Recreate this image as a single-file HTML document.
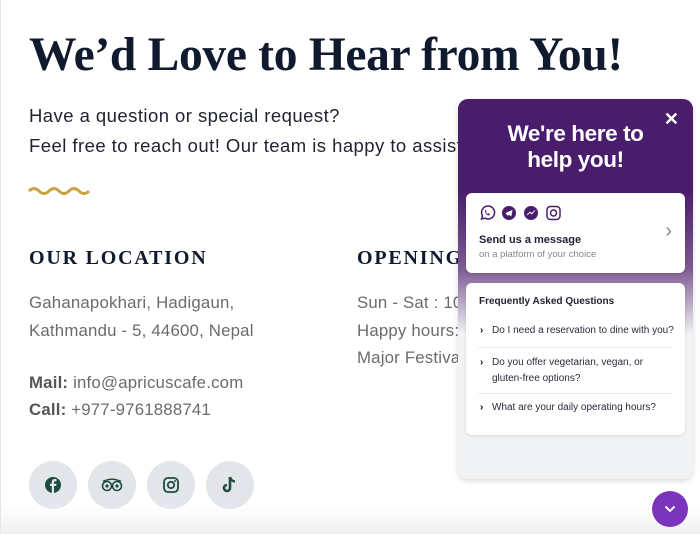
<!DOCTYPE html>
<html><head><meta charset="utf-8"><style>
*{margin:0;padding:0;box-sizing:border-box}
body{width:700px;height:534px;overflow:hidden;background:#fff;position:relative;font-family:"Liberation Sans",sans-serif;border-left:1px solid #e6e6e6}
.abs{position:absolute;white-space:nowrap}
h1{position:absolute;left:28px;top:28px;font-family:"Liberation Serif",serif;font-weight:bold;font-size:47.5px;color:#0f1a2e;letter-spacing:-0.3px;white-space:nowrap}
.p{font-size:18.5px;color:#1f2230;letter-spacing:0.45px}
.h2{font-family:"Liberation Serif",serif;font-size:20px;letter-spacing:1.8px;color:#0f1a2e;font-weight:bold}
.g{font-size:16.8px;color:#6b6b6b;letter-spacing:0.2px}
.g b{color:#555}
.soc{position:absolute;top:461px;width:48px;height:48px;border-radius:50%;background:#e2e5ea;display:flex;align-items:center;justify-content:center}
.w{position:absolute;left:457px;top:99px;width:235px;height:380px;border-radius:10px;background:linear-gradient(#4a1d6c 0,#4a1d6c 92px,#7d5a93 170px,#f2f3f5 235px,#f2f3f5 100%);box-shadow:0 2px 6px rgba(0,0,0,.15);overflow:hidden}
.card{position:absolute;left:8px;width:219px;background:#fff;border-radius:6px;box-shadow:0 1px 3px rgba(0,0,0,.12)}
.q{position:absolute;left:14px;font-size:10px;color:#2a2a3a}
.q span{display:inline-block;width:12px;font-weight:bold;color:#111}
.sep{position:absolute;left:12px;right:12px;height:1px;background:#ececec}
</style></head><body>
<h1>We’d Love to Hear from You!</h1>
<div class="abs p" style="left:28px;top:105px">Have a question or special request?</div>
<div class="abs p" style="left:28px;top:135px">Feel free to reach out! Our team is happy to assist you.</div>
<svg class="abs" style="left:27px;top:185px" width="62" height="12" viewBox="0 0 62 12"><path d="M1 6 Q6 1 11 6 T21 6 T31 6 T41 6 T51 6 T61 6" fill="none" stroke="#c9a244" stroke-width="3"/></svg>
<div class="abs h2" style="left:28px;top:247px">OUR LOCATION</div>
<div class="abs h2" style="left:356px;top:247px">OPENING HOURS</div>
<div class="abs g" style="left:28px;top:293px">Gahanapokhari, Hadigaun,</div>
<div class="abs g" style="left:28px;top:321px">Kathmandu - 5, 44600, Nepal</div>
<div class="abs g" style="left:28px;top:373px"><b>Mail:</b> info@apricuscafe.com</div>
<div class="abs g" style="left:28px;top:400px"><b>Call:</b> +977-9761888741</div>
<div class="abs g" style="left:356px;top:293px">Sun - Sat : 10:00 AM</div>
<div class="abs g" style="left:356px;top:321px">Happy hours: 4-7 PM</div>
<div class="abs g" style="left:356px;top:348px">Major Festivals</div>
<div class="soc" style="left:28px"><svg width="18" height="18" viewBox="0 0 18 18"><circle cx="9" cy="9" r="8" fill="#1d4d3c"/><path d="M10 17V10h2.2l.3-2.3H10V6.3c0-.7.3-1 1-1h1.5V3.2C12 3.1 11.4 3 10.8 3 9 3 7.8 4 7.8 6v1.7H6V10h1.8v7z" fill="#e2e5ea"/></svg></div>
<div class="soc" style="left:87px"><svg width="22" height="14" viewBox="0 0 22 14"><g fill="none" stroke="#1d4d3c" stroke-width="1.6"><circle cx="6" cy="8" r="4.5"/><circle cx="16" cy="8" r="4.5"/><path d="M2 3.5Q11-1 20 3.5"/></g><circle cx="6" cy="8" r="1.6" fill="#1d4d3c"/><circle cx="16" cy="8" r="1.6" fill="#1d4d3c"/></svg></div>
<div class="soc" style="left:146px"><svg width="16" height="16" viewBox="0 0 16 16"><rect x="1" y="1" width="14" height="14" rx="4" fill="none" stroke="#1d4d3c" stroke-width="1.8"/><circle cx="8" cy="8" r="3.2" fill="none" stroke="#1d4d3c" stroke-width="1.8"/><circle cx="12" cy="4" r="1" fill="#1d4d3c"/></svg></div>
<div class="soc" style="left:205px"><svg width="16" height="18" viewBox="0 0 16 18"><path d="M8 1v11a3 3 0 1 1-3-3" fill="none" stroke="#1d4d3c" stroke-width="2.6"/><path d="M8 1q1 4 5 4.5" fill="none" stroke="#1d4d3c" stroke-width="2.4"/></svg></div>
<div class="abs" style="left:0;top:505px;width:700px;height:29px;background:linear-gradient(rgba(240,240,240,0),#f0f0f0)"></div>

<div class="w">
 <div class="abs" style="right:14px;top:10px;color:#fff;font-size:18px;font-weight:bold">✕</div>
 <div class="abs" style="left:0;width:235px;top:22px;text-align:center;color:#fff;font-size:22.5px;font-weight:bold;letter-spacing:-0.4px;line-height:26px;white-space:normal">We're here to<br>help you!</div>
 <div class="card" style="top:94px;height:80px">
  <svg class="abs" style="left:13px;top:12px" width="84" height="16" viewBox="0 0 84 16">
   <g fill="none" stroke="#4a1d6c" stroke-width="1.5"><path d="M2.5 14l1-3.2A6.5 6.5 0 1 1 6 13.2z"/></g><path d="M6 5.5q0 4 4 5l1-1.2-1.5-1-1 .6q-1-.6-1.5-1.6l.6-1-1-1.5z" fill="#4a1d6c"/>
   <circle cx="30" cy="8" r="7" fill="#4a1d6c"/><path d="M26.5 8l7-3-1.2 6.5-2.3-1.8-1.3 1.2z" fill="#fff"/>
   <circle cx="52" cy="8" r="7" fill="#4a1d6c"/><path d="M48 10l3-3 1.8 1.5 3-3-3 3.5-1.8-1.5z" fill="#fff" stroke="#fff" stroke-width=".8"/>
   <rect x="68" y="1.5" width="13" height="13" rx="3.5" fill="none" stroke="#4a1d6c" stroke-width="1.5"/><circle cx="74.5" cy="8" r="3" fill="none" stroke="#4a1d6c" stroke-width="1.5"/>
  </svg>
  <div class="abs" style="left:13px;top:41px;font-size:11px;font-weight:bold;color:#1f2230">Send us a message</div>
  <div class="abs" style="left:13px;top:56px;font-size:9.5px;color:#888">on a platform of your choice</div>
  <div class="abs" style="right:13px;top:27px;color:#888;font-size:20px">›</div>
 </div>
 <div class="card" style="top:184px;height:152px">
  <div class="abs" style="left:13px;top:13px;font-size:10px;font-weight:bold;color:#1f2230">Frequently Asked Questions</div>
  <div class="q" style="top:42px"><span>›</span>Do I need a reservation to dine with you?</div>
  <div class="sep" style="top:64px"></div>
  <div class="q" style="top:72px;line-height:16px"><span>›</span>Do you offer vegetarian, vegan, or<br><span></span>gluten-free options?</div>
  <div class="sep" style="top:110px"></div>
  <div class="q" style="top:119px"><span>›</span>What are your daily operating hours?</div>
 </div>
</div>
<div class="abs" style="left:651px;top:491px;width:36px;height:36px;border-radius:50%;background:#7b35bd;display:flex;align-items:center;justify-content:center"><svg width="12" height="8" viewBox="0 0 12 8"><path d="M1.5 1.5l4.5 4.5 4.5-4.5" fill="none" stroke="#fff" stroke-width="2"/></svg></div>
</body></html>
